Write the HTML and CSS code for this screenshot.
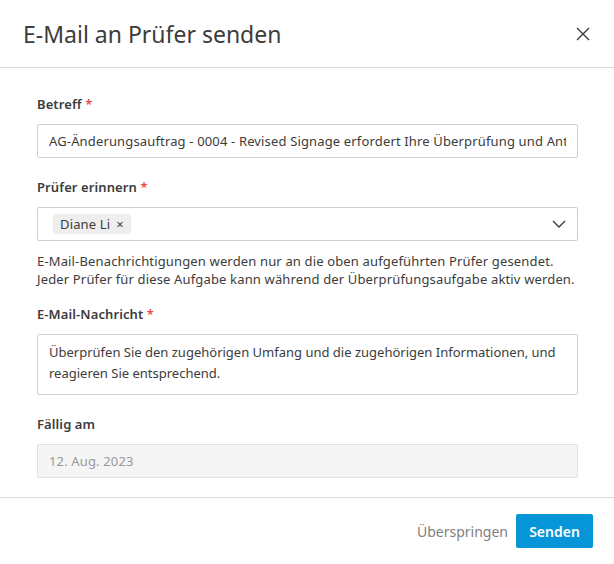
FILE: index.html
```html
<!DOCTYPE html>
<html lang="de">
<head>
<meta charset="utf-8">
<link rel="stylesheet" href="styles.css">
</head>
<body>
<div class="dialog">
  <header class="header">
    <h1 class="title">E-Mail an Prüfer senden</h1>
    <button class="close" aria-label="Schließen">
      <svg width="14" height="14" viewBox="0 0 14 14"><path d="M1 1L13 13M13 1L1 13" stroke="#3c3c3c" stroke-width="1.4" fill="none"/></svg>
    </button>
  </header>
  <main class="body">
    <div class="field">
      <label class="label">Betreff <span class="req">*</span></label>
      <div class="input"><span class="clip">AG-Änderungsauftrag - 0004 - Revised Signage erfordert Ihre Überprüfung und Antwort</span></div>
    </div>
    <div class="field field-help">
      <label class="label">Prüfer erinnern <span class="req">*</span></label>
      <div class="input select">
        <span class="chip">Diane Li <span class="chip-x">×</span></span>
        <svg class="chev" width="14" height="8" viewBox="0 0 14 8"><path d="M1 1L7 7L13 1" stroke="#3c3c3c" stroke-width="1.4" fill="none"/></svg>
      </div>
      <p class="help">E-Mail-Benachrichtigungen werden nur an die oben aufgeführten Prüfer gesendet.<br>Jeder Prüfer für diese Aufgabe kann während der Überprüfungsaufgabe aktiv werden.</p>
    </div>
    <div class="field">
      <label class="label">E-Mail-Nachricht <span class="req">*</span></label>
      <div class="input textarea">Überprüfen Sie den zugehörigen Umfang und die zugehörigen Informationen, und reagieren Sie entsprechend.</div>
    </div>
    <div class="field">
      <label class="label">Fällig am</label>
      <div class="input disabled">12. Aug. 2023</div>
    </div>
  </main>
  <footer class="footer">
    <button class="btn-link">Überspringen</button>
    <button class="btn-primary">Senden</button>
  </footer>
</div>
</body>
</html>
```
FILE: styles.css
```css
* { box-sizing: border-box; }
html, body { margin: 0; padding: 0; background: #fff; }
body { font-family: "Noto Sans", "Open Sans", sans-serif; color: #3c3c3c; }
.dialog { width: 614px; height: 564px; display: flex; flex-direction: column; }
.header { height: 68px; display: flex; align-items: center; justify-content: space-between; padding: 0 24px 0 23px; border-bottom: 1px solid #dcdcdc; flex-shrink: 0; }
.title { margin: 0; font-size: 23px; font-weight: 400; color: #3c3c3c; }
.close { border: 0; background: none; padding: 0; width: 14px; height: 14px; display: flex; }
.body { flex: 1; min-height: 0; overflow: hidden; padding: 27px 36px 0 37px; }
.field { margin-bottom: 20px; }
.field-help { margin-bottom: 17px; }
.label { display: block; font-size: 13px; font-weight: 600; color: #3c3c3c; line-height: 18px; margin-bottom: 11px; letter-spacing: 0.1px; }
.req { color: #e8474a; }
.input { border: 1px solid #cfcfcf; border-radius: 2px; height: 34px; display: flex; align-items: center; padding: 0 11px; font-size: 13px; color: #3c3c3c; letter-spacing: 0.15px; overflow: hidden; }
.clip { white-space: nowrap; overflow: hidden; }
.select { justify-content: space-between; padding: 0 11px 0 15px; }
.chip { background: #eeeeee; border-radius: 2px; padding: 0 7px 0 7px; height: 20px; display: inline-flex; align-items: center; font-size: 13px; gap: 6px; }
.chip-x { font-size: 13px; }
.help { margin: 11px 0 0; font-size: 13px; line-height: 18px; color: #3c3c3c; letter-spacing: 0.15px; }
.textarea { height: 61px; align-items: flex-start; padding: 7px 11px; line-height: 21px; letter-spacing: 0; }
.disabled { background: #f5f5f5; border-color: #e2e2e2; color: #999; }
.footer { height: 67px; border-top: 1px solid #dcdcdc; display: flex; align-items: center; justify-content: flex-end; padding: 0 21px 0 0; gap: 8px; flex-shrink: 0; }
.btn-link { border: 0; background: none; font-family: inherit; font-size: 14px; color: #808080; padding: 0; }
.btn-primary { border: 0; background: #0696d7; color: #fff; font-family: inherit; font-size: 14px; font-weight: 600; height: 34px; width: 77px; border-radius: 2px; }
```
